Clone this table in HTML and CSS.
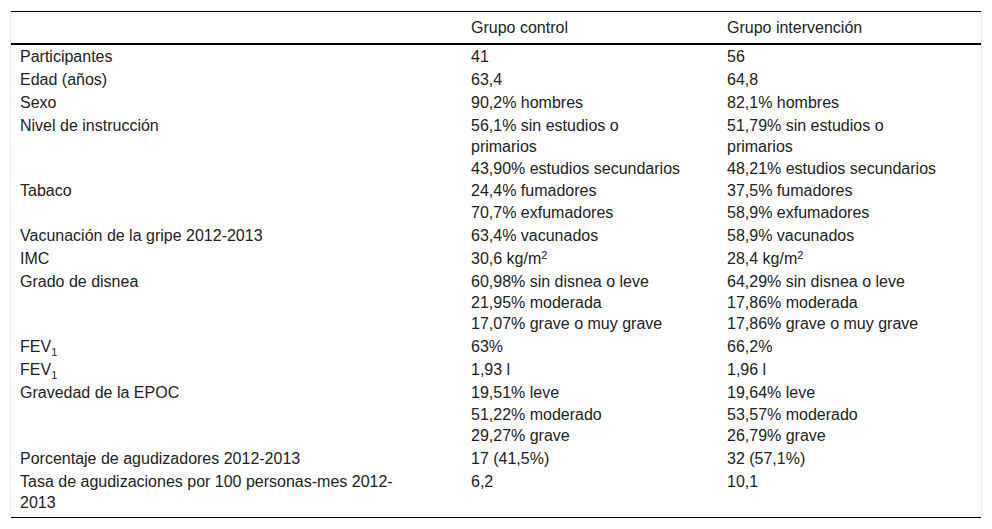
FILE: index.html
```html
<!DOCTYPE html>
<html lang="es">
<head>
<meta charset="utf-8">
<title>Tabla</title>
<link rel="stylesheet" href="styles.css">
</head>
<body>
<div class="wrap">
<table class="tbl">
<colgroup><col class="c1"><col class="c2"><col class="c3"></colgroup>
<thead>
<tr><th></th><th>Grupo control</th><th>Grupo intervención</th></tr>
</thead>
<tbody>
<tr><td>Participantes</td><td>41</td><td>56</td></tr>
<tr><td>Edad (años)</td><td>63,4</td><td>64,8</td></tr>
<tr><td>Sexo</td><td>90,2% hombres</td><td>82,1% hombres</td></tr>
<tr><td>Nivel de instrucción</td><td>56,1% sin estudios o primarios<br>43,90% estudios secundarios</td><td>51,79% sin estudios o primarios<br>48,21% estudios secundarios</td></tr>
<tr><td>Tabaco</td><td>24,4% fumadores<br>70,7% exfumadores</td><td>37,5% fumadores<br>58,9% exfumadores</td></tr>
<tr><td>Vacunación de la gripe 2012-2013</td><td>63,4% vacunados</td><td>58,9% vacunados</td></tr>
<tr><td>IMC</td><td>30,6 kg/m<sup>2</sup></td><td>28,4 kg/m<sup>2</sup></td></tr>
<tr><td>Grado de disnea</td><td>60,98% sin disnea o leve<br>21,95% moderada<br>17,07% grave o muy grave</td><td>64,29% sin disnea o leve<br>17,86% moderada<br>17,86% grave o muy grave</td></tr>
<tr><td>FEV<sub>1</sub></td><td>63%</td><td>66,2%</td></tr>
<tr><td>FEV<sub>1</sub></td><td>1,93 l</td><td>1,96 l</td></tr>
<tr><td>Gravedad de la EPOC</td><td>19,51% leve<br>51,22% moderado<br>29,27% grave</td><td>19,64% leve<br>53,57% moderado<br>26,79% grave</td></tr>
<tr><td>Porcentaje de agudizadores 2012-2013</td><td>17 (41,5%)</td><td>32 (57,1%)</td></tr>
<tr class="last"><td>Tasa de agudizaciones por 100 personas-mes 2012-2013</td><td>6,2</td><td>10,1</td></tr>
</tbody>
</table>
</div>
</body>
</html>
```
FILE: styles.css
```css
html, body {
  margin: 0;
  padding: 0;
  background: #fff;
}
body {
  font-family: "Liberation Sans", Arial, sans-serif;
  font-size: 16px;
  color: #222;
}
.wrap {
  margin: 10px 10px 0 10px;
  width: 970px;
  padding-top: 1px;
  border-left: 1px solid #ececec;
  border-right: 1px solid #ececec;
}
.tbl {
  width: 970px;
  border-collapse: collapse;
  table-layout: fixed;
  border-top: 1px solid #000;
  border-bottom: 1px solid #000;
}
.c1 { width: 451px; }
.c2 { width: 256px; }
.c3 { width: 263px; }
.tbl th {
  font-weight: normal;
  text-align: left;
  padding: 5px 9px;
  line-height: 21px;
  border-bottom: 2px solid #000;
}
.tbl td {
  vertical-align: top;
  text-align: left;
  padding: 1px 9px 0.5px 9px;
  line-height: 21.4px;
}
.tbl td:first-child { padding-right: 50px; }
.tbl td:nth-child(2) { padding-right: 35px; }
.tbl td:nth-child(3) { padding-right: 40px; }
.tbl tr.last td { padding-bottom: 3.6px; }
sup, sub {
  font-size: 11px;
  line-height: 0;
}
sup { vertical-align: 5px; }
sub { vertical-align: -4px; }
```
